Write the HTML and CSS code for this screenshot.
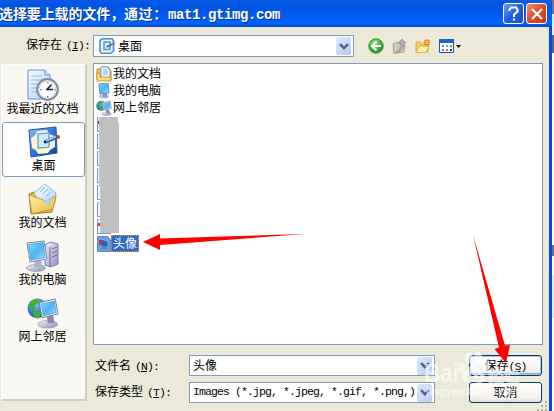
FILE: index.html
```
<!DOCTYPE html>
<html lang="zh-CN">
<head>
    <meta charset="UTF-8">
    <meta name="viewport" content="width=device-width, initial-scale=1.0">
    <title>选择要上载的文件</title>
    <link rel="stylesheet" href="styles.css">
</head>
<body>
    <!-- shared shapes and gradients -->
    <svg class="defs" width="0" height="0">
        <defs>
            <linearGradient id="screen" x1="0" y1="0" x2="1" y2="1">
                <stop offset="0" stop-color="#7fe0ff"/>
                <stop offset="0.5" stop-color="#4db4f5"/>
                <stop offset="1" stop-color="#9fdcff"/>
            </linearGradient>
            <linearGradient id="gold" x1="0" y1="0" x2="1" y2="1">
                <stop offset="0" stop-color="#fff3b0"/>
                <stop offset="1" stop-color="#e9b637"/>
            </linearGradient>
            <linearGradient id="paper" x1="0" y1="0" x2="1" y2="1">
                <stop offset="0" stop-color="#fff"/>
                <stop offset="1" stop-color="#a9cdf8"/>
            </linearGradient>
            <linearGradient id="steel" x1="0" y1="0" x2="1" y2="1">
                <stop offset="0" stop-color="#f4f4fb"/>
                <stop offset="1" stop-color="#8d8db8"/>
            </linearGradient>
            <linearGradient id="deskblue" x1="0" y1="0" x2="1" y2="1">
                <stop offset="0" stop-color="#8fc8fa"/>
                <stop offset="0.5" stop-color="#2f77d6"/>
                <stop offset="1" stop-color="#0b3f9c"/>
            </linearGradient>
            <radialGradient id="globe" cx="0.4" cy="0.3" r="0.7">
                <stop offset="0" stop-color="#7cc6ff"/>
                <stop offset="1" stop-color="#0a4fb5"/>
            </radialGradient>
            <radialGradient id="green" cx="0.4" cy="0.3" r="0.7">
                <stop offset="0" stop-color="#8ee07a"/>
                <stop offset="1" stop-color="#1f9420"/>
            </radialGradient>
        </defs>
        <symbol id="desktop" viewBox="0 0 32 32">
            <path d="M1 4 28 1 29 27 3 31Z" fill="url(#deskblue)" stroke="#1d53ac"/>
            <path d="M3 12q5-2 6-7l10-1q2 5 8 6v11q-5 2-7 6L10 28q-1-4-6-6Z" fill="#fbf6cf"/>
            <path d="M10 8 21 7v14l-11 1Z" fill="#d3eafd" stroke="#4a97e3" stroke-width="1.2"/>
            <path d="M17 16 29 11" stroke="#276dbc" stroke-width="3.600"/>
            <path d="M18 15 28 10.500" stroke="#9ed2ff" stroke-width="1.400"/>
            <circle cx="30" cy="11" r="2" fill="#d13a1e"/>
            <circle cx="17" cy="16" r="1.300" fill="#123"/>
        </symbol>
        <symbol id="desktop-small" viewBox="0 0 16 16">
            <path d="M1 2.500 3 1 13 .500 14.500 3v10L12 15 2.500 15.500 1 13Z" fill="#fbf6dc" stroke="#3d8ee0" stroke-width="1.600"/>
            <path d="M5 4h6v7.500H5Z" fill="#d9eefe" stroke="#4797e4" stroke-width="1.500"/>
            <path d="M7.500 9 13.500 6" stroke="#276dbc" stroke-width="1.600"/>
            <path d="M13.500 4.500h2v2h-2z" fill="#dd4a22"/>
        </symbol>
        <symbol id="computer" viewBox="0 0 34 32">
            <path d="M19 5 24 2 32 4v20l-7 3-6-2Z" fill="url(#steel)" stroke="#7d7da8"/>
            <path d="M24 7v19M26 9l5-2M26 13l5-2M26 17l5-2" stroke="#666b98" fill="none"/>
            <ellipse cx="10" cy="28" rx="9.500" ry="3.500" fill="url(#steel)" stroke="#9090b5" stroke-width=".7"/>
            <path d="M9 20h6l1 7H8Z" fill="#aeb0cf"/>
            <path d="M1 3 18 1 21 19 4 22Z" fill="#e9ebf8" stroke="#7f86b5"/>
            <path d="M2.500 4.500 17 2.500 19 17.500 5 20Z" fill="url(#screen)" stroke="#2f8fdd" stroke-width=".6"/>
        </symbol>
        <symbol id="network" viewBox="0 0 34 34">
            <circle cx="11" cy="12" r="10.500" fill="url(#globe)"/>
            <path d="M2 8q4-7 11-6l-1 4-4 3 1 4-3 1-3-3ZM6 16l6-2 3 4-3 5-4-2Z" fill="#43b02a"/>
            <ellipse cx="22" cy="29" rx="10.500" ry="4" fill="url(#steel)" stroke="#9090b5" stroke-width=".7"/>
            <path d="M21 20h7l1 8h-7Z" fill="#8587b3"/>
            <path d="M13 6 30 2 33 18 16 22Z" fill="#eceefa" stroke="#73779f"/>
            <path d="M15 7.500 29 4.500 31 16.500 17.500 20Z" fill="url(#screen)" stroke="#2f8fdd" stroke-width=".6"/>
        </symbol>
        <symbol id="mydocs" viewBox="0 0 30 32">
            <path d="M1 11 6 9 10 12 27 15 24 29 3 31Z" fill="#e8b73e" stroke="#a87a17"/>
            <path d="M6 10 17 1 28 10 27 20 16 27Z" fill="url(#paper)" stroke="#8db8e6"/>
            <path d="M12 9 17 4M15 11l5-5M18 13l5-4" stroke="#85b9ed"/>
            <path d="M1 12 18 18 28 13 25 26 4 31Z" fill="url(#gold)" stroke="#bd8d25" stroke-width=".8"/>
            <path d="M14 18 24 15 20 23Z" fill="#a4d2fa"/>
        </symbol>
        <symbol id="chevron" viewBox="0 0 10 7">
            <path d="M1 1.200 5 5.200 9 1.200" fill="none" stroke="#4d6185" stroke-width="2.400"/>
        </symbol>
    </svg>

    <div class="window">
        <header class="titlebar">
            <h1><span class="title-cn">选择要上载的文件，</span><span class="title-cn wide">通过：</span><span class="title-en">mat1.gtimg.com</span></h1>
            <button class="help"><svg width="13" height="15" viewBox="0 0 13 15"><path d="M2.500 5V3.500L4 1.500h5l1.500 2v2L7 8.500V11" fill="none" stroke="#fff" stroke-width="2"/><path d="M6 12.500h2v2H6z" fill="#fff"/></svg></button>
            <button class="close"><svg width="12" height="12" viewBox="0 0 12 12"><path d="M1 1l10 10M11 1 1 11" stroke="#fff" stroke-width="2.200"/></svg></button>
        </header>

        <div class="toolbar">
            <label>保存在<span class="en mnemonic">(<u>I</u>):</span></label>
            <div class="combo look-in">
                <svg width="16" height="16"><use href="#desktop-small"/></svg>
                <span>桌面</span>
                <i class="drop"><svg width="10" height="7"><use href="#chevron"/></svg></i>
            </div>
            <div class="tools">
                <svg width="16" height="16" viewBox="0 0 16 16"><circle cx="8" cy="8" r="7.200" fill="url(#green)" stroke="#2a962c"/><path d="M8.500 3.500 4 8l4.500 4.500M4.500 8H13" fill="none" stroke="#fff" stroke-width="2.200"/></svg>
                <svg width="15" height="16" viewBox="0 0 15 16"><path d="M1 6 6 4l1 2 6 1-1 7-10 1.500Z" fill="#cfcdc3" stroke="#a19f96"/><path d="M4 14q5-2 5-9H6l4-4 4 4h-2q0 7-6 9Z" fill="#b2b0a8" stroke="#8e8c85" stroke-width=".7"/></svg>
                <svg width="16" height="15" viewBox="0 0 16 15"><path d="M1 3h4l1 2h7v8H1Z" fill="#f3cf65" stroke="#d9ac43"/><path d="M1 13.500 4 7h10l-3 6.500Z" fill="#fff0a5" stroke="#dbae46"/><path d="M12 0v7M8.500 3.500h7M9.500 1l5 5M14.500 1l-5 5" stroke="#ee6f28" stroke-width="1.200"/><circle cx="12" cy="3.500" r="1.300" fill="#ffd95c"/></svg>
                <svg width="22" height="14" viewBox="0 0 22 14"><path d="M.5.5h14v13H.5z" fill="#fff" stroke="#1656bc"/><path d="M0 0h15v4H0z" fill="#1765d2"/><path d="M3 6h2v2H3zM3 10h2v2H3z" fill="#6478b5"/><path d="M7 6h2v2H7z" fill="#4ba7dc"/><path d="M11 6h2v2h-2z" fill="#46a441"/><path d="M7 10h2v2H7z" fill="#e06b39"/><path d="M11 10h2v2h-2z" fill="#273e97"/><path d="M17 6h5l-2.500 3Z" fill="#000"/></svg>
            </div>
        </div>

        <div class="content">
            <nav class="places">
                <a class="place">
                    <svg width="32" height="32" viewBox="0 0 32 32"><path d="M1 1h17l5 5v24H1Z" fill="url(#paper)" stroke="#5c92dd"/><path d="M18 1v5h5" fill="#dcecff" stroke="#5c92dd"/><path d="M4 7h11M4 11h12M4 15h8M4 19h6M4 23h6" stroke="#92bdf0"/><circle cx="20.500" cy="20.500" r="10.300" fill="#fafcff" stroke="#85909f" stroke-width="2.200"/><circle cx="20.500" cy="20.500" r="8.500" fill="none" stroke="#c8ddf2"/><path d="M20 20.500 24.500 15.500M19 20.500h7" stroke="#16222f" stroke-width="1.500"/><path d="M20 13h1.500v1.500H20zM13 20h1.500v1.500H13zM20 27h1.500v1.500H20zM27 20h1.500v1.500H27z" fill="#e66e32"/></svg>
                    <span>我最近的文档</span>
                </a>
                <a class="place active"><svg width="32" height="32"><use href="#desktop"/></svg><span>桌面</span></a>
                <a class="place"><svg width="30" height="32"><use href="#mydocs"/></svg><span>我的文档</span></a>
                <a class="place"><svg width="34" height="32"><use href="#computer"/></svg><span>我的电脑</span></a>
                <a class="place"><svg width="34" height="32"><use href="#network"/></svg><span>网上邻居</span></a>
            </nav>

            <main>
                <ul class="files">
                    <li><svg width="16" height="16" viewBox="0 0 16 16"><path d="M1 3h4l1-2h6l3 4v9H1Z" fill="#efc75b" stroke="#b68a25"/><path d="M5 1h6l3 3v8H5Z" fill="#edf6ff" stroke="#6fa1d8"/><path d="M7 4h4M7 6h5M7 8h5" stroke="#7eb3ec"/><path d="M.5 7H4v4h11v4H1Z" fill="#fbdc7c" stroke="#bb902c" stroke-width=".8"/></svg><span>我的文档</span></li>
                    <li><svg width="16" height="16" viewBox="0 0 16 16"><ellipse cx="8" cy="13.500" rx="5" ry="2" fill="#bebed8"/><path d="M7 9h4v5H7Z" fill="#8d91b9"/><path d="M3 1 12 0l1 10-9 1Z" fill="url(#screen)" stroke="#5b8cc5"/></svg><span>我的电脑</span></li>
                    <li><svg width="16" height="16"><use href="#network"/></svg><span>网上邻居</span></li>
                    <li><i class="doc red"></i></li>
                    <li><i class="doc"></i></li>
                    <li><i class="doc"></i></li>
                    <li><i class="doc"></i></li>
                    <li><i class="doc"></i></li>
                    <li><i class="doc"></i></li>
                    <li><i class="doc red"></i></li>
                    <li class="selected"><svg width="14" height="16" viewBox="0 0 14 16"><path d="M.5.5h10l3 3v12H.5Z" fill="#6c9ce2" stroke="#5d8bd3"/><path d="M2 4h5v5H2z" fill="#a64258"/><circle cx="7.500" cy="8" r="3" fill="#1a62c5"/><path d="M7 9l4 4H4Z" fill="#4097a0"/></svg><span>头像</span></li>
                </ul>

                <form class="fields">
                    <label>文件名<span class="en mnemonic">(<u>N</u>):</span></label>
                    <div class="combo"><span>头像</span><i class="drop"><svg width="10" height="7"><use href="#chevron"/></svg></i></div>
                    <button type="button" class="btn default">保存<span class="en">(<u>S</u>)</span></button>
                    <label class="type">保存类型<span class="en mnemonic">(<u>T</u>):</span></label>
                    <div class="combo"><span class="en">Images (*.jpg, *.jpeg, *.gif, *.png,)</span><i class="drop"><svg width="10" height="7"><use href="#chevron"/></svg></i></div>
                    <button type="button" class="btn">取消</button>
                </form>
            </main>
        </div>
        <div class="grip"></div>
    </div>
    <div class="behind"></div>

    <!-- watermark and pointer arrows over the dialog -->
    <svg class="overlay" width="554" height="411" viewBox="0 0 554 411">
        <g class="watermark">
            <text x="424" y="382" class="wm-logo" textLength="35" lengthAdjust="spacingAndGlyphs">Bai</text>
            <ellipse cx="462" cy="368" rx="4" ry="5"/>
            <ellipse cx="469" cy="358" rx="4" ry="5.500"/>
            <ellipse cx="478" cy="357" rx="4" ry="5.500"/>
            <ellipse cx="486" cy="366" rx="4" ry="5"/>
            <path fill-rule="evenodd" d="M473 365c4 0 5 4 9 7 5 4 3 11-2 11-3 0-4-1-7-1s-4 1-7 0c-6-1-6-7-2-10s5-7 9-7ZM471 372v7h-2q-2 0-2-2t2-2h2v4h1.500v-7ZM474 375v2.500q0 1.500 2 1.500h2v-4h1.500v5.500H476q-3.500 0-3.500-3V375Z"/>
            <text x="488" y="382" class="wm-cn">经验</text>
            <text x="426" y="395" class="wm-url" textLength="96">jingyan.baidu.com</text>
        </g>
        <path class="arrow" d="M143 242 160 234v4.500L305 234 160 245v5Z"/>
        <path class="arrow" d="M473 235 505 345.500l5-.5-4 18-11.500-14 4.500-1.500Z"/>
    </svg>
</body>
</html>
```

FILE: styles.css
```
* {
    margin: 0;
    padding: 0;
    box-sizing: border-box;
}

body {
    width: 554px;
    height: 411px;
    display: flex;
    position: relative;
    overflow: hidden;
    background: #fff;
    color: #000;
    font: 12px/17px "Noto Sans CJK SC", sans-serif;
}

svg {
    display: block;
    flex: none;
}

.defs {
    position: absolute;
}

.en {
    font-family: "Liberation Mono", monospace;
    font-size: 11.5px;
    letter-spacing: -0.9px;
    white-space: pre;
}

.mnemonic {
    margin-left: 4px;
}

.window {
    width: 552px;
    height: 411px;
    position: relative;
    background: #ece9d8;
    border-right: 3px solid #0848d8;
}

.behind {
    width: 2px;
    background: linear-gradient(#6672a0 0 14px, #e3e9f5 14px 35px, #53608f 35px 53px, #fff 53px 245px, #666e94 245px 256px, #fff 256px 275px, #dbe8fb 275px 318px, #fff 318px);
}

/* title bar */
.titlebar {
    width: 552px;
    height: 27px;
    display: flex;
    align-items: center;
    gap: 3px;
    padding-right: 5px;
    background: linear-gradient(#0a5ae8 0, #0053e1 5px, #005bf0 15px, #0066ff 23px, #0046cc 27px);
}

.titlebar h1 {
    flex: 1;
    height: 20px;
    display: flex;
    margin-left: -1px;
    color: #fff;
    font-size: 14px;
    line-height: 18px;
    white-space: nowrap;
    text-shadow: 1px 1px #0a2f91;
}

.title-cn {
    width: 125px;
    letter-spacing: -0.1px;
}

.title-cn.wide {
    width: 44px;
    letter-spacing: 0.6px;
}

.title-en {
    font: bold 14px/22px "Liberation Mono", monospace;
    letter-spacing: -0.4px;
}

.titlebar button {
    width: 21px;
    height: 21px;
    display: flex;
    align-items: center;
    justify-content: center;
    border: 1px solid #fff;
    border-radius: 3px;
}

.help {
    background: linear-gradient(135deg, #6d9af3, #245edc 50%, #1b4fcb);
}

.titlebar .close {
    margin-left: -1px;
    background: linear-gradient(135deg, #ef9377, #dc4c24 50%, #c33d15);
}

/* look-in row */
.toolbar {
    height: 37px;
    display: flex;
    padding: 8px 0 0 26px;
}

.toolbar label {
    width: 67px;
}

.combo {
    height: 22px;
    display: flex;
    align-items: center;
    padding: 0 2px 0 3px;
    background: #fff;
    border: 1px solid #7f9db9;
}

.combo > span {
    flex: 1;
    padding-bottom: 2px;
    white-space: pre;
}

.look-in {
    width: 261px;
    padding-left: 5px;
    gap: 3px;
}

.drop {
    width: 15px;
    height: 18px;
    display: flex;
    align-items: center;
    justify-content: center;
    border-radius: 2px;
    background: linear-gradient(135deg, #dce7fe, #b7cbf5);
}

.tools {
    height: 22px;
    display: flex;
    align-items: center;
    gap: 8px;
    margin-left: 14px;
}

.content {
    display: flex;
    align-items: flex-start;
    gap: 6px;
    padding-left: 1px;
    margin-top: -1px;
}

/* places bar */
.places {
    width: 86px;
    height: 337px;
    margin-top: 1px;
    background: #f9f8f3;
    border: 1px solid #fff;
    border-right: 2px solid #d0cdbf;
    border-bottom: 2px solid #d0cdbf;
}

.place {
    height: 57px;
    display: flex;
    flex-direction: column;
    align-items: center;
    padding: 4px 2px 0 0;
}

.place span {
    line-height: 13px;
    white-space: nowrap;
}

.place.active {
    height: 55px;
    margin-bottom: 2px;
    padding: 3px 0 0;
    background: #fff;
    border: 1px solid #7a9ebd;
    border-radius: 3px;
}

/* file list */
.files {
    width: 450px;
    height: 282px;
    list-style: none;
    padding: 1px 0 0 2px;
    background: #fff;
    border: 1px solid #7f9db9;
    position: relative;
}

.files li {
    height: 17px;
    display: flex;
    align-items: center;
    gap: 1px;
}

.files li span {
    line-height: 15px;
    margin-top: -3px;
}

.files::after {
    content: "";
    position: absolute;
    left: 3px;
    top: 53px;
    width: 22px;
    height: 116px;
    background: #c0c0c0;
    clip-path: polygon(10% 0, 95% 0, 95% 5%, 100% 5%, 100% 100%, 14% 100%, 14% 60%, 10% 60%);
}

.doc {
    width: 14px;
    height: 15px;
    margin-left: 1px;
    background: #f2f7ff;
    border: 1px solid #7798cd;
    border-top-color: #b9cbe8;
}

.doc.red {
    background: linear-gradient(#e52d16, #e52d16) 0 3px / 4px 3px no-repeat #f2f7ff;
}

.selected svg {
    margin-left: 1px;
}

.files .selected span {
    margin: 0 0 0 -1px;
    padding: 0 1px 2px;
    line-height: 13px;
    color: #fff;
    background: #316ac5;
    border: 1px dotted #e5a13a;
}

/* name, type and buttons */
.fields {
    display: grid;
    grid-template-columns: 94px 246px 73px;
    grid-template-rows: 21px 21px;
    row-gap: 6px;
    margin: 10px 0 0 2px;
}

.fields .combo {
    height: 21px;
}

.fields label {
    padding-top: 1px;
}

.fields .type {
    margin-top: -1px;
}

.fields .combo + .btn {
    margin-left: 34px;
}

.btn {
    width: 73px;
    height: 21px;
    padding-bottom: 2px;
    font: inherit;
    line-height: 17px;
    border: 1px solid #003c74;
    border-radius: 3px;
    background: linear-gradient(#fff, #f3f2ec 80%, #dcd8cc);
}

.btn.default {
    box-shadow: inset 0 0 0 1px #a9c5f0, inset 0 -2px #86a5dc;
}

.grip {
    position: absolute;
    right: 1px;
    bottom: 0;
    width: 11px;
    height: 10px;
    background: radial-gradient(circle at 1px 1px, #b7b29f 1px, transparent 1.3px) 0 0 / 4px 4px;
    clip-path: polygon(75% 0, 100% 0, 100% 100%, 0 100%, 0 75%);
}

.overlay {
    position: absolute;
    left: 0;
    top: 0;
    pointer-events: none;
}

.watermark {
    fill: #fff;
    opacity: 0.6;
}

.wm-logo {
    font: bold 25px "Liberation Sans", sans-serif;
}

.wm-cn {
    font: bold 16px "Noto Sans CJK SC", sans-serif;
}

.wm-url {
    font: bold 11px "Liberation Sans", sans-serif;
}

.arrow {
    fill: #f00;
}
```
